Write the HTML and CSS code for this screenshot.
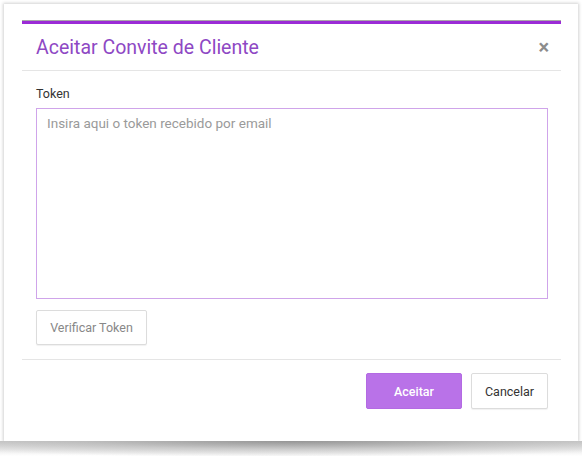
FILE: index.html
```html
<!DOCTYPE html>
<html lang="pt">
<head>
<meta charset="utf-8">
<title>Aceitar Convite de Cliente</title>
<link rel="stylesheet" href="styles.css">
</head>
<body>
<div class="frame">
  <div class="modal">
    <div class="modal-header">
      <h4 class="modal-title">Aceitar Convite de Cliente</h4>
      <span class="close">&times;</span>
    </div>
    <div class="modal-body">
      <label class="label" for="token">Token</label>
      <textarea id="token" class="input" placeholder="Insira aqui o token recebido por email"></textarea>
      <button class="btn btn-default btn-verify">Verificar Token</button>
    </div>
    <div class="modal-footer">
      <button class="btn btn-primary">Aceitar</button>
      <button class="btn btn-default btn-cancel">Cancelar</button>
    </div>
  </div>
</div>
<div class="curl"></div>
</body>
</html>
```
FILE: styles.css
```css
* { box-sizing: border-box; }
html, body { margin: 0; padding: 0; background: #fff; }
body {
  font-family: Roboto, "Liberation Sans", sans-serif;
  width: 582px;
  height: 456px;
  overflow: hidden;
  padding: 4px 4px 0 4px;
}
.frame {
  background: #fff;
  height: 437px;
  padding: 17px 17px 0 18px;
  box-shadow: 0 0 3px 1px rgba(0,0,0,0.18);
}
.modal {
  border-top: 3px solid #9b2bd6;
  box-shadow: 0 -1px 0 #a9a9a9;
}
.modal-header {
  display: flex;
  align-items: center;
  justify-content: space-between;
  height: 47px;
  padding: 0 14px 0 14px;
  border-bottom: 1px solid #e5e5e5;
}
.modal-title {
  margin: 0;
  font-size: 19.5px;
  font-weight: 400;
  color: #8e48c4;
}
.close {
  font-size: 20px;
  font-weight: 700;
  color: #8c8c8c;
  line-height: 1;
  margin-right: -2px;
  margin-top: 0;
}
.modal-body {
  display: flex;
  flex-direction: column;
  align-items: flex-start;
  padding: 15px 13px 14px 14px;
  border-bottom: 1px solid #e5e5e5;
}
.label {
  font-size: 12.5px;
  color: #333;
  line-height: 16px;
  margin-bottom: 6px;
}
.input {
  width: 512px;
  height: 191px;
  border: 1px solid #cfa4ea;
  border-radius: 0;
  padding: 6px 10px;
  font-family: Roboto, "Liberation Sans", sans-serif;
  font-size: 13.5px;
  color: #555;
  resize: none;
  outline: none;
  margin: 0;
}
.input::placeholder { color: #9a9a9a; }
.btn {
  font-family: Roboto, "Liberation Sans", sans-serif;
  font-size: 12.5px;
  border-radius: 2px;
  cursor: pointer;
  margin: 0;
}
.btn-default {
  background: #fff;
  border: 1px solid #dcdcdc;
  color: #333;
  box-shadow: 0 1px 1px rgba(0,0,0,0.06);
}
.btn-verify {
  margin-top: 11px;
  width: 111px;
  height: 35px;
  color: #888;
}
.modal-footer {
  display: flex;
  justify-content: flex-end;
  gap: 9px;
  padding: 13px 13px 0 14px;
}
.btn-primary {
  width: 96px;
  height: 36px;
  background: #b972e8;
  border: 1px solid #b36ae3;
  color: #fff;
  font-weight: 500;
}
.btn-cancel {
  width: 77px;
  height: 36px;
}
.curl {
  height: 15px;
  margin: 0 -4px;
  background:
    radial-gradient(ellipse 70% 110% at 50% 0, rgba(110,110,110,0.6) 0%, rgba(150,150,150,0.35) 50%, rgba(255,255,255,0) 100%),
    linear-gradient(#cfcfcf, #ffffff);
}
```
